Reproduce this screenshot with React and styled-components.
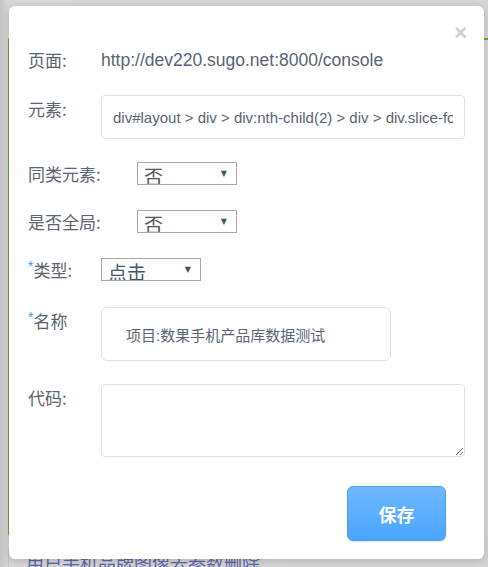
import React from "react";
import styled, { createGlobalStyle } from "styled-components";

const GlobalStyle = createGlobalStyle`
  html, body {
    margin: 0;
    padding: 0;
  }
  body {
    font-family: "Liberation Sans", "Noto Sans CJK SC", sans-serif;
  }
`;

const Page = styled.div`
  position: relative;
  width: 488px;
  height: 567px;
  overflow: hidden;
  background: linear-gradient(to right, #c4c4c4 0px, #d8d8d8 8px, #d6d6d6 100%);
`;

// page that sits behind the dialog, dimmed by the backdrop
const Behind = styled.div`
  padding-top: 38px;
  padding-left: 8px;
`;

const BehindCard = styled.div`
  height: 495px;
  border-left: 2px solid #58b524;
  border-top: 2px solid #58b524;
  background: #dadada;
`;

const BehindText = styled.div`
  margin-top: 14px;
  padding-left: 17px;
  border-left: 1px solid #c2c2c2;
  font-family: "Noto Sans CJK SC", sans-serif;
  font-size: 18px;
  color: #6266a6;
`;

const Modal = styled.div`
  position: absolute;
  left: 9px;
  top: 6px;
  width: 475px;
  height: 553px;
  box-sizing: border-box;
  background: #fff;
  border-radius: 6px;
  box-shadow: 0 2px 10px rgba(0, 0, 0, 0.18);
  padding: 0 19px;
  display: flex;
  flex-direction: column;
`;

const Close = styled.span`
  position: absolute;
  right: 17px;
  top: 17px;
  font-size: 22px;
  font-weight: bold;
  line-height: 20px;
  color: #cdcdcd;
  cursor: pointer;
`;

const Row = styled.div`
  display: flex;
  align-items: flex-start;
  margin-top: ${(p) => p.$mt}px;
`;

const Label = styled.div`
  width: ${(p) => p.$w || 73}px;
  flex-shrink: 0;
  padding-top: ${(p) => p.$pt || 0}px;
  font-family: "Noto Sans CJK SC", sans-serif;
  font-size: 17px;
  line-height: 22px;
  color: #5b6470;
`;

const Star = styled.span`
  color: #3d9bf2;
  font-family: "Liberation Sans", sans-serif;
  font-size: 14px;
  vertical-align: top;
  line-height: 14px;
`;

const PlainText = styled.div`
  font-size: 17.5px;
  line-height: 22px;
  color: #596473;
`;

const TextInput = styled.input`
  box-sizing: border-box;
  width: ${(p) => p.$w}px;
  height: ${(p) => p.$h}px;
  padding: 0 ${(p) => p.$px}px;
  border: 1px solid #dde3ea;
  border-radius: ${(p) => p.$r}px;
  background: #fff;
  font-family: "Liberation Sans", "Noto Sans CJK SC", sans-serif;
  font-size: 15px;
  color: #596473;
  outline: none;
`;

const CodeArea = styled.textarea`
  box-sizing: border-box;
  width: 364px;
  height: 73px;
  border: 1px solid #dde3ea;
  border-radius: 4px;
  padding: 8px 10px;
  font-family: "Liberation Sans", sans-serif;
  font-size: 14px;
  color: #596473;
  outline: none;
`;

const SelectBox = styled.div`
  box-sizing: border-box;
  width: 100px;
  height: 23px;
  border: 1px solid #a6a6a6;
  display: flex;
  justify-content: space-between;
  overflow: hidden;
  padding: 0 9px 0 6px;
  background: #fff;
`;

const SelectValue = styled.span`
  font-family: "Noto Sans CJK SC", sans-serif;
  font-size: 19px;
  line-height: 19px;
  padding-top: 3px;
  color: #4a5462;
`;

const Caret = styled.span`
  font-family: "DejaVu Sans", sans-serif;
  font-size: 8px;
  line-height: 8px;
  padding-top: 7px;
  color: #4a5462;
`;

const Footer = styled.div`
  display: flex;
  justify-content: flex-end;
  margin-top: 29px;
  padding-right: 19px;
`;

const SaveButton = styled.button`
  width: 99px;
  height: 55px;
  border: 1px solid #4a9fef;
  border-radius: 6px;
  background: linear-gradient(to bottom, #6fb8ff, #4aa5ff);
  color: #fff;
  font-family: "Noto Sans CJK SC", sans-serif;
  font-weight: bold;
  font-size: 18px;
  box-shadow: 0 1px 2px rgba(0, 0, 0, 0.12);
  cursor: pointer;
`;

function Select(props) {
  return (
    <SelectBox>
      <SelectValue>{props.value}</SelectValue>
      <Caret>▼</Caret>
    </SelectBox>
  );
}

export default function App() {
  return (
    <Page>
      <GlobalStyle />
      <Behind>
        <BehindCard />
        <BehindText>用户手机品牌图像去参数删除</BehindText>
      </Behind>
      <Modal>
        <Close>×</Close>
        <Row $mt={43}>
          <Label>页面:</Label>
          <PlainText>http://dev220.sugo.net:8000/console</PlainText>
        </Row>
        <Row $mt={24}>
          <Label $pt={3}>元素:</Label>
          <TextInput
            readOnly
            $w={364}
            $h={44}
            $px={11}
            $r={4}
            value="div#layout > div > div:nth-child(2) > div > div.slice-form-wrapper"
          />
        </Row>
        <Row $mt={23}>
          <Label $w={109} $pt={1}>同类元素:</Label>
          <Select value="否" />
        </Row>
        <Row $mt={25}>
          <Label $w={109} $pt={1}>是否全局:</Label>
          <Select value="否" />
        </Row>
        <Row $mt={25}>
          <Label $pt={1}>
            <Star>*</Star>类型:
          </Label>
          <Select value="点击" />
        </Row>
        <Row $mt={26}>
          <Label $pt={3}>
            <Star>*</Star>名称
          </Label>
          <TextInput
            readOnly
            $w={290}
            $h={54}
            $px={24}
            $r={6}
            value="项目:数果手机产品库数据测试"
          />
        </Row>
        <Row $mt={23}>
          <Label $pt={3}>代码:</Label>
          <CodeArea />
        </Row>
        <Footer>
          <SaveButton>保存</SaveButton>
        </Footer>
      </Modal>
    </Page>
  );
}
